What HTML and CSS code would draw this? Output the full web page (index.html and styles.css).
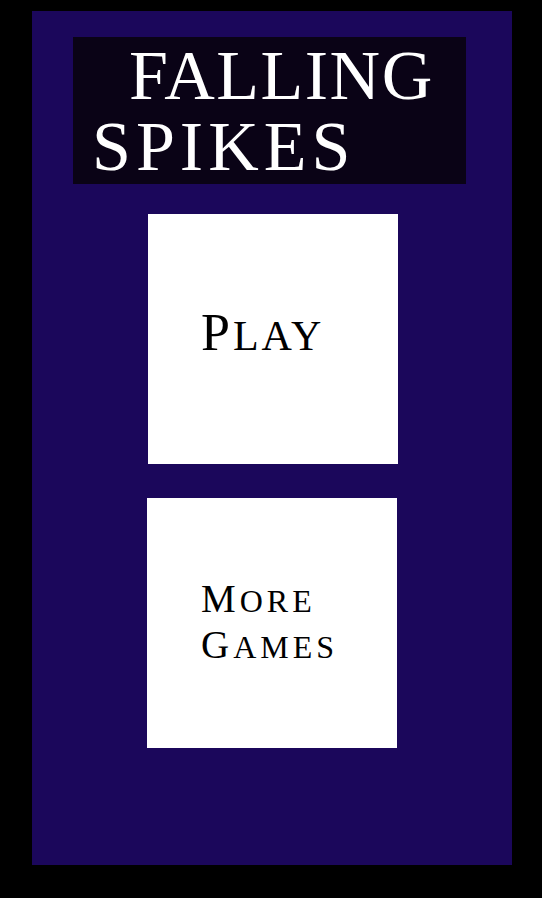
FILE: index.html
```html
<!DOCTYPE html>
<html>
<head>
<meta charset="utf-8">
<link rel="stylesheet" href="styles.css">
</head>
<body>
<main class="panel">
  <h1 class="title"><span class="line1">FALLING</span><br><span class="line2">SPIKES</span></h1>
  <div class="btn btn-play"><span class="cap">P</span><span class="sc">lay</span></div>
  <div class="btn btn-more"><span class="cap">M</span><span class="sc">ore</span><br><span class="cap">G</span><span class="sc">ames</span></div>
</main>
</body>
</html>
```
FILE: styles.css
```css
html, body {
  margin: 0;
  padding: 0;
  background: #000;
}
body {
  width: 542px;
  height: 898px;
  overflow: hidden;
  font-family: "Liberation Serif", "Times New Roman", serif;
}
.panel {
  margin: 11px 0 0 32px;
  width: 480px;
  height: 854px;
  background: #1b075b;
  box-sizing: border-box;
  padding-top: 26px;
  display: flex;
  flex-direction: column;
}
.title {
  margin: 0 0 0 41px;
  width: 393px;
  height: 147px;
  box-sizing: border-box;
  padding: 3px 0 0 19px;
  background: #0a0316;
  color: #fff;
  font-weight: normal;
  font-size: 70px;
  line-height: 71px;
  white-space: nowrap;
}
.line1 {
  margin-left: 37px;
  letter-spacing: 1.5px;
}
.line2 {
  letter-spacing: 5px;
}
.btn {
  width: 250px;
  height: 250px;
  background: #fff;
  color: #000;
  box-sizing: border-box;
  white-space: nowrap;
}
.btn-play {
  margin: 30px 0 0 116px;
  padding: 89px 0 0 53px;
  font-size: 52px;
  line-height: 60px;
  letter-spacing: 3px;
}
.btn-play .sc {
  font-size: 42px;
  text-transform: uppercase;
}
.btn-more {
  margin: 34px 0 0 115px;
  padding: 79px 0 0 54px;
  font-size: 39px;
  line-height: 44px;
  letter-spacing: 4px;
}
.btn-more .sc {
  font-size: 32px;
  text-transform: uppercase;
}
```
